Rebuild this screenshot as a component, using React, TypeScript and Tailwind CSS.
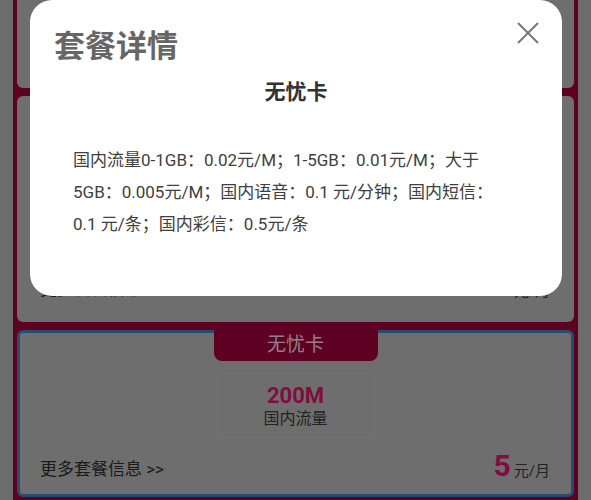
import { useState } from "react";

type Plan = {
  name: string;
  flow: string;
  price: string;
  selected?: boolean;
};

const plans: Plan[] = [
  { name: "畅享卡", flow: "1G", price: "9" },
  { name: "畅聊卡", flow: "500M", price: "19" },
  { name: "无忧卡", flow: "200M", price: "5", selected: true },
];

function PlanCard({ plan, height, bottom, showBody = true }: { plan: Plan; height: string; bottom: string; showBody?: boolean }) {
  return (
    <div
      className={`flex flex-col items-center rounded-[6px] bg-[#b7b7b7] ${height} ${
        plan.selected ? "border-[3px] border-[#407fbf]" : "border-[3px] border-transparent"
      }`}
    >
      {showBody && (
        <>
          {/* Tab */}
          <div className="-mt-[3px] flex h-[31px] w-[164px] items-center justify-center rounded-b-[8px] bg-[#9d0039] text-[19px] text-[#f5d5e0]">
            {plan.name}
          </div>

          {/* Flow box */}
          <div className="mt-[12px] flex h-[65px] w-[158px] flex-col items-center justify-center border border-[#c2c2c2]">
            <div className="text-[22px] leading-[26px] font-bold text-[#d8156a]">{plan.flow}</div>
            <div className="text-[16px] leading-[20px] text-[#3a3a3a]">国内流量</div>
          </div>
        </>
      )}

      {/* Bottom row */}
      <div className={`mt-auto flex w-full items-end justify-between pl-[20px] pr-[21px] ${bottom}`}>
        <span className="mb-[3px] text-[17px] leading-[22px] text-[#2e2e2e]">更多套餐信息 &gt;&gt;</span>
        <span className="flex items-baseline">
          <span className="text-[30px] leading-[34px] font-bold text-[#d8156a]">{plan.price}</span>
          <span className="ml-[3px] text-[15px] text-[#3a3a3a]">元/月</span>
        </span>
      </div>
    </div>
  );
}

function DetailModal({ onClose }: { onClose: () => void }) {
  return (
    <div className="absolute left-[30px] top-0 h-[296px] w-[532px] rounded-[22px] bg-white pt-[27px]">
      <button onClick={onClose} className="absolute right-[22px] top-[21px] h-[24px] w-[24px]">
        <svg viewBox="0 0 24 24" width="24" height="24" fill="none" stroke="#777" strokeWidth="2">
          <line x1="2" y1="2" x2="22" y2="22" />
          <line x1="22" y1="2" x2="2" y2="22" />
        </svg>
      </button>

      <h2 className="pl-[24px] text-[31px] leading-[40px] font-bold text-[#666]">套餐详情</h2>
      <h3 className="mt-[11px] text-center text-[21px] leading-[28px] font-bold text-[#333]">无忧卡</h3>

      <p className="mt-[38px] pl-[43px] pr-[59px] text-[17px] leading-[32px] text-[#404040]">
        国内流量0-1GB：0.02元/M；1-5GB：0.01元/M；大于5GB：0.005元/M；国内语音：0.1 元/分钟；国内短信：0.1 元/条；国内彩信：0.5元/条
      </p>
    </div>
  );
}

export default function App() {
  const [open, setOpen] = useState(true);

  return (
    <div className="relative h-[500px] overflow-hidden bg-[#b4b4b4] px-[13px] font-['Roboto','Noto_Sans_CJK_SC',sans-serif]">
      <div className="flex h-full flex-col gap-[8px] bg-[#9d0039] px-[4px] pb-[3px]">
        <div className="h-[88px] rounded-b-[6px] bg-[#b7b7b7]" />
        <PlanCard plan={plans[1]} height="h-[226px]" bottom="pb-[16px]" showBody={!open} />
        <PlanCard plan={plans[2]} height="h-[167px]" bottom="pb-[11px]" />
      </div>

      {open && (
        <>
          <div className="absolute inset-0 bg-black/40" />
          <DetailModal onClose={() => setOpen(false)} />
        </>
      )}
    </div>
  );
}
